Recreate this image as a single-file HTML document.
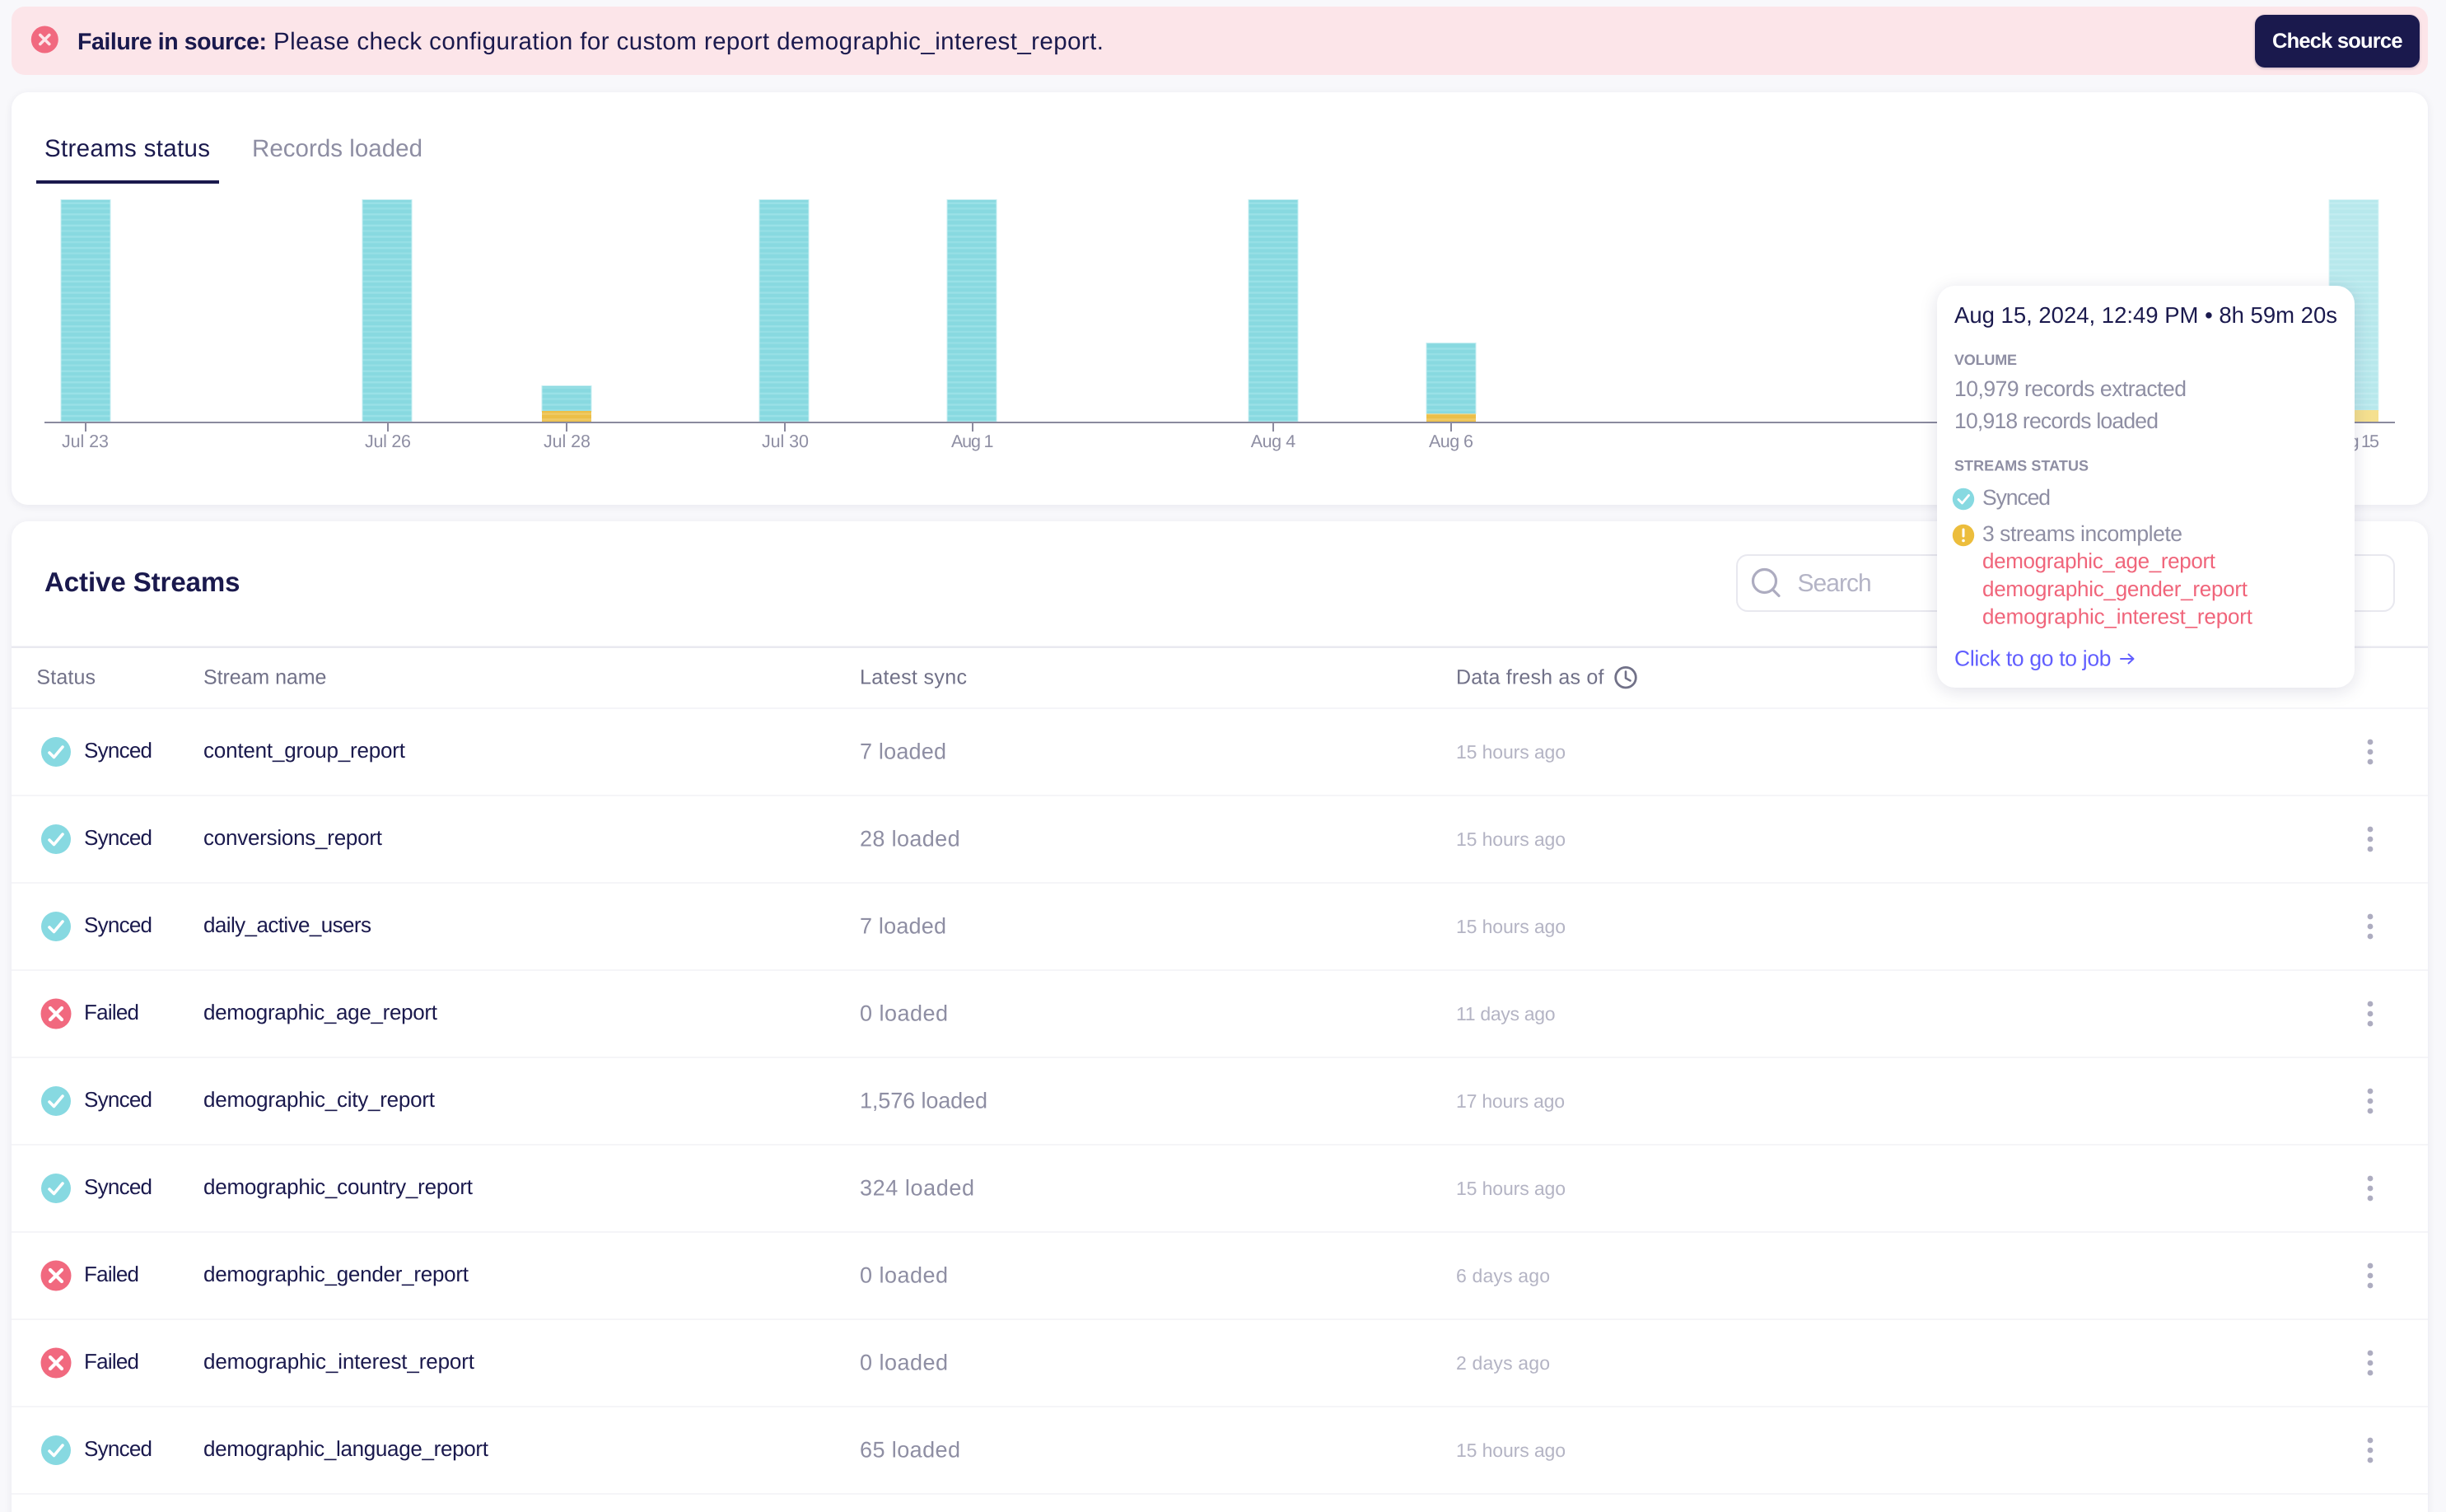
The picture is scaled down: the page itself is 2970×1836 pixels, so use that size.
<!DOCTYPE html>
<html lang="en">
<head>
<meta charset="utf-8">
<title>Streams status</title>
<style>
html,body{margin:0;padding:0;width:2970px;height:1836px;overflow:hidden;background:#f8f8fb}
body{position:relative;font-family:"Liberation Sans",Arial,sans-serif}
.abs{position:absolute}
.banner{left:14px;top:8px;width:2934px;height:83px;background:#fce5e9;border-radius:16px}
.card{background:#fff;border-radius:20px;box-shadow:0 2px 10px rgba(26,25,77,.07)}
.c1{left:14px;top:112px;width:2934px;height:501px}
.c2{left:14px;top:633px;width:2934px;height:1240px}
.btn{left:2738px;top:18px;width:200px;height:64px;background:#1a194d;border-radius:12px;box-shadow:0 1px 3px rgba(26,25,77,.25)}
.search{left:2108px;top:673px;width:796px;height:66px;border:2px solid #e8e8ef;border-radius:14px;background:#fff}
.tip{left:2352px;top:347px;width:507px;height:488px;background:#fff;border-radius:22px;box-shadow:0 4px 22px rgba(26,25,77,.13)}
svg.layer{position:absolute;left:0;top:0;width:2970px;height:1836px;text-rendering:geometricPrecision}
text{font-family:"Liberation Sans",Arial,sans-serif}
.n{font-size:26px;fill:#1a194d}
.h{font-size:25px;fill:#717188}
.l{font-size:27px;fill:#8e8ea3}
.f{font-size:23px;fill:#b4b4c4}
.a{font-size:21.5px;fill:#8e8ea3}
.g{font-size:26.5px;fill:#8e8ea3}
.u{font-size:18px;font-weight:bold;fill:#8e8ea3}
.r{font-size:26px;fill:#f0657b}
</style>
</head>
<body>
<div class="abs banner"></div>
<div class="abs card c1"></div>
<div class="abs card c2"></div>
<div class="abs btn"></div>
<div class="abs search"></div>

<svg class="layer" viewBox="0 0 2970 1836" xmlns="http://www.w3.org/2000/svg">
<defs>
<pattern id="st" x="0" y="242.5" width="60" height="13.6" patternUnits="userSpaceOnUse">
<rect width="60" height="13.6" fill="#88d9e0"/>
<rect y="3" width="60" height="2.4" fill="#9ae1e7"/>
<rect y="9.6" width="60" height="2.4" fill="#96dfe5"/>
</pattern>
<pattern id="ye" x="0" y="498" width="60" height="6.8" patternUnits="userSpaceOnUse">
<rect width="60" height="6.8" fill="#ecbf48"/>
<rect y="3.4" width="60" height="2.4" fill="#f0ca66"/>
</pattern>
<g id="ok"><circle r="18" fill="#87d9e1"/><path d="M-8 1 L-2.5 6.5 L8 -6" fill="none" stroke="#fff" stroke-width="3.6" stroke-linecap="round" stroke-linejoin="round"/></g>
<g id="no"><circle r="18.5" fill="#f1697f"/><path d="M-7 -7 L7 7 M7 -7 L-7 7" fill="none" stroke="#fff" stroke-width="4.2" stroke-linecap="round"/></g>
<g id="dots"><circle cy="-12" r="3.4" fill="#adacc0"/><circle r="3.4" fill="#adacc0"/><circle cy="12" r="3.4" fill="#adacc0"/></g>
</defs>

<!-- banner -->
<circle cx="54.3" cy="48" r="16.5" fill="#f1697f"/>
<path d="M48.8 42.5 L59.8 53.5 M59.8 42.5 L48.8 53.5" stroke="#fde4e8" stroke-width="3.6" stroke-linecap="round"/>
<text x="94" y="60" font-size="28.5" font-weight="bold" fill="#1a194d" textLength="230">Failure in source:</text>
<text x="332" y="60" font-size="29.5" fill="#1a194d" textLength="1008">Please check configuration for custom report demographic_interest_report.</text>
<text x="2759" y="58" font-size="25.5" font-weight="bold" fill="#fff" textLength="158.5">Check source</text>

<!-- tabs -->
<text x="54" y="190" font-size="29.5" fill="#1a194d" textLength="201">Streams status</text>
<text x="306" y="190" font-size="29.5" fill="#8e8ea3" textLength="207">Records loaded</text>
<rect x="44" y="219" width="222" height="4" fill="#1a194d"/>

<!-- bars -->
<g stroke="#c4edf1" stroke-width="1">
<rect x="74" y="242.5" width="60" height="269.5" fill="url(#st)"/>
<rect x="440" y="242.5" width="60" height="269.5" fill="url(#st)"/>
<rect x="658" y="468.5" width="60" height="31" fill="url(#st)"/>
<rect x="922" y="242.5" width="60" height="269.5" fill="url(#st)"/>
<rect x="1150" y="242.5" width="60" height="269.5" fill="url(#st)"/>
<rect x="1516" y="242.5" width="60" height="269.5" fill="url(#st)"/>
<rect x="1732" y="416.5" width="60" height="86" fill="url(#st)"/>
<rect x="2828" y="242.5" width="60" height="256" fill="url(#st)" opacity=".6"/>
</g>
<rect x="658" y="499" width="60" height="13" fill="url(#ye)"/>
<rect x="1732" y="502.5" width="60" height="9.5" fill="url(#ye)"/>
<rect x="2828" y="498" width="60" height="14" fill="#f5e08f"/>

<!-- axis -->
<rect x="54" y="512" width="2854" height="2" fill="#8a8a9e"/>
<g fill="#8a8a9e">
<rect x="103" y="514" width="2" height="10"/>
<rect x="470" y="514" width="2" height="10"/>
<rect x="687" y="514" width="2" height="10"/>
<rect x="952" y="514" width="2" height="10"/>
<rect x="1180" y="514" width="2" height="10"/>
<rect x="1545" y="514" width="2" height="10"/>
<rect x="1761" y="514" width="2" height="10"/>
<rect x="2857" y="514" width="2" height="10"/>
</g>
<text class="a" x="75" y="543" textLength="57">Jul 23</text>
<text class="a" x="443" y="543" textLength="56">Jul 26</text>
<text class="a" x="660" y="543" textLength="57">Jul 28</text>
<text class="a" x="925" y="543" textLength="57">Jul 30</text>
<text class="a" x="1155" y="543" textLength="51.5">Aug 1</text>
<text class="a" x="1518.7" y="543" textLength="54.5">Aug 4</text>
<text class="a" x="1735" y="543" textLength="54">Aug 6</text>
<text class="a" x="2830" y="543" textLength="59">Aug 15</text>

<!-- active streams header -->
<text x="54" y="718" font-size="33" font-weight="bold" fill="#1a194d" textLength="237.5">Active Streams</text>
<circle cx="2142.5" cy="705.5" r="14" fill="none" stroke="#adacc0" stroke-width="3.2"/>
<path d="M2152.5 716 L2160 723.5" stroke="#adacc0" stroke-width="3.2" stroke-linecap="round"/>
<text x="2182.5" y="718" font-size="30" fill="#b4b4c6" textLength="90.2">Search</text>
<rect x="14" y="784.5" width="2934" height="2.5" fill="#e9e9f0"/>

<text class="h" x="44.4" y="830.7" textLength="71.6">Status</text>
<text class="h" x="247" y="830.7" textLength="149.4">Stream name</text>
<text class="h" x="1044" y="830.7" textLength="130">Latest sync</text>
<text class="h" x="1768" y="830.7" textLength="179.4">Data fresh as of</text>
<circle cx="1974" cy="822.7" r="12.3" fill="none" stroke="#717188" stroke-width="2.8"/>
<path d="M1974 815.5 V823.5 L1979.5 826.5" fill="none" stroke="#717188" stroke-width="2.6" stroke-linecap="round" stroke-linejoin="round"/>

<!-- row dividers -->
<g fill="#f5f5f8">
<rect x="14" y="859" width="2934" height="2"/>
<rect x="14" y="965" width="2934" height="2"/>
<rect x="14" y="1071" width="2934" height="2"/>
<rect x="14" y="1177" width="2934" height="2"/>
<rect x="14" y="1283" width="2934" height="2"/>
<rect x="14" y="1389" width="2934" height="2"/>
<rect x="14" y="1495" width="2934" height="2"/>
<rect x="14" y="1601" width="2934" height="2"/>
<rect x="14" y="1707" width="2934" height="2"/>
<rect x="14" y="1813" width="2934" height="2"/>
</g>

<!-- rows -->
<g transform="translate(0,913)"><use href="#ok" x="68"/><text class="n" x="102" y="7" textLength="83">Synced</text><text class="n" x="247" y="7" textLength="245">content_group_report</text><text class="l" x="1044" y="8.7" textLength="105">7 loaded</text><text class="f" x="1768" y="8" textLength="133">15 hours ago</text><use href="#dots" x="2878"/></g>
<g transform="translate(0,1019)"><use href="#ok" x="68"/><text class="n" x="102" y="7" textLength="83">Synced</text><text class="n" x="247" y="7" textLength="217">conversions_report</text><text class="l" x="1044" y="8.7" textLength="121.6">28 loaded</text><text class="f" x="1768" y="8" textLength="133">15 hours ago</text><use href="#dots" x="2878"/></g>
<g transform="translate(0,1125)"><use href="#ok" x="68"/><text class="n" x="102" y="7" textLength="83">Synced</text><text class="n" x="247" y="7" textLength="204">daily_active_users</text><text class="l" x="1044" y="8.7" textLength="105">7 loaded</text><text class="f" x="1768" y="8" textLength="133">15 hours ago</text><use href="#dots" x="2878"/></g>
<g transform="translate(0,1231)"><use href="#no" x="68"/><text class="n" x="102" y="7" textLength="67">Failed</text><text class="n" x="247" y="7" textLength="284">demographic_age_report</text><text class="l" x="1044" y="8.7" textLength="107">0 loaded</text><text class="f" x="1768" y="8" textLength="120.5">11 days ago</text><use href="#dots" x="2878"/></g>
<g transform="translate(0,1337)"><use href="#ok" x="68"/><text class="n" x="102" y="7" textLength="83">Synced</text><text class="n" x="247" y="7" textLength="281">demographic_city_report</text><text class="l" x="1044" y="8.7" textLength="155">1,576 loaded</text><text class="f" x="1768" y="8" textLength="132">17 hours ago</text><use href="#dots" x="2878"/></g>
<g transform="translate(0,1443)"><use href="#ok" x="68"/><text class="n" x="102" y="7" textLength="83">Synced</text><text class="n" x="247" y="7" textLength="327">demographic_country_report</text><text class="l" x="1044" y="8.7" textLength="139">324 loaded</text><text class="f" x="1768" y="8" textLength="133">15 hours ago</text><use href="#dots" x="2878"/></g>
<g transform="translate(0,1549)"><use href="#no" x="68"/><text class="n" x="102" y="7" textLength="67">Failed</text><text class="n" x="247" y="7" textLength="322">demographic_gender_report</text><text class="l" x="1044" y="8.7" textLength="107">0 loaded</text><text class="f" x="1768" y="8" textLength="114">6 days ago</text><use href="#dots" x="2878"/></g>
<g transform="translate(0,1655)"><use href="#no" x="68"/><text class="n" x="102" y="7" textLength="67">Failed</text><text class="n" x="247" y="7" textLength="329">demographic_interest_report</text><text class="l" x="1044" y="8.7" textLength="107">0 loaded</text><text class="f" x="1768" y="8" textLength="114">2 days ago</text><use href="#dots" x="2878"/></g>
<g transform="translate(0,1761)"><use href="#ok" x="68"/><text class="n" x="102" y="7" textLength="83">Synced</text><text class="n" x="247" y="7" textLength="346">demographic_language_report</text><text class="l" x="1044" y="8.7" textLength="122">65 loaded</text><text class="f" x="1768" y="8" textLength="133">15 hours ago</text><use href="#dots" x="2878"/></g>
</svg>

<div class="abs tip"></div>

<svg class="layer" viewBox="0 0 2970 1836" xmlns="http://www.w3.org/2000/svg">
<text x="2373" y="392" font-size="27.5" fill="#1a194d" textLength="465">Aug 15, 2024, 12:49 PM • 8h 59m 20s</text>
<text class="u" x="2373" y="443" textLength="76">VOLUME</text>
<text class="g" x="2373" y="481" textLength="282">10,979 records extracted</text>
<text class="g" x="2373" y="520" textLength="248">10,918 records loaded</text>
<text class="u" x="2373" y="571.7" textLength="163">STREAMS STATUS</text>
<circle cx="2384" cy="606" r="13.2" fill="#87d9e1"/>
<path d="M2378 606.5 L2382.5 611 L2390.5 601.5" fill="none" stroke="#fff" stroke-width="2.8" stroke-linecap="round" stroke-linejoin="round"/>
<text class="g" x="2407" y="613" textLength="83">Synced</text>
<circle cx="2384" cy="650" r="13.2" fill="#ecbd3c"/>
<path d="M2384 643 V651" stroke="#fff" stroke-width="3" stroke-linecap="round"/>
<circle cx="2384" cy="656.5" r="1.8" fill="#fff"/>
<text class="g" x="2407" y="657" textLength="243">3 streams incomplete</text>
<text class="r" x="2407" y="690" textLength="283">demographic_age_report</text>
<text class="r" x="2407" y="724" textLength="322">demographic_gender_report</text>
<text class="r" x="2407" y="757.5" textLength="328">demographic_interest_report</text>
<text x="2373" y="808.5" font-size="26.5" fill="#615eff" textLength="190.5">Click to go to job</text>
<path d="M2575 800 H2590 M2584.5 794.5 L2590.5 800 L2584.5 805.5" fill="none" stroke="#615eff" stroke-width="2" stroke-linecap="round" stroke-linejoin="round"/>
</svg>
</body>
</html>
